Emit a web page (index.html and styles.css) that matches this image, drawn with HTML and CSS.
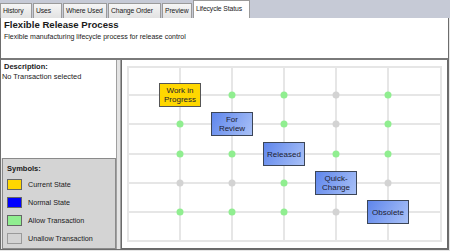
FILE: index.html
```html
<!DOCTYPE html>
<html lang="en">
<head>
    <meta charset="UTF-8">
    <title>Lifecycle Status</title>
    <link rel="stylesheet" href="styles.css">
</head>
<body>
    <div class="tabs">
        <div class="tab tab-history">History</div>
        <div class="tab tab-uses">Uses</div>
        <div class="tab tab-where">Where Used</div>
        <div class="tab tab-change">Change Order</div>
        <div class="tab tab-preview">Preview</div>
        <div class="tab tab-status active">Lifecycle Status</div>
    </div>
    <div class="page">
        <div class="header">
            <div class="title">Flexible Release Process</div>
            <div class="subtitle">Flexible manufacturing lifecycle process for release control</div>
        </div>
        <div class="main">
            <div class="side">
                <div class="desc">
                    <div class="label">Description:</div>
                    <div class="text">No Transaction selected</div>
                </div>
                <div class="symbols">
                    <div class="label">Symbols:</div>
                    <div class="sym-list">
                        <div class="sym"><span class="swatch current"></span>Current State</div>
                        <div class="sym"><span class="swatch normal"></span>Normal State</div>
                        <div class="sym"><span class="swatch allow"></span>Allow Transaction</div>
                        <div class="sym"><span class="swatch unallow"></span>Unallow Transaction</div>
                    </div>
                </div>
            </div>
            <div class="splitter"></div>
            <div class="canvas">
                <div class="grid">
                    <svg class="lines" width="311" height="172" viewBox="0 0 311 172">
                        <g stroke="#e6e6e6" stroke-width="2">
                            <line x1="51" y1="0" x2="51" y2="172"/>
                            <line x1="103" y1="0" x2="103" y2="172"/>
                            <line x1="155" y1="0" x2="155" y2="172"/>
                            <line x1="207" y1="0" x2="207" y2="172"/>
                            <line x1="259" y1="0" x2="259" y2="172"/>
                            <line x1="0" y1="27" x2="311" y2="27"/>
                            <line x1="0" y1="56" x2="311" y2="56"/>
                            <line x1="0" y1="86" x2="311" y2="86"/>
                            <line x1="0" y1="115" x2="311" y2="115"/>
                            <line x1="0" y1="144" x2="311" y2="144"/>
                        </g>
                        <g fill="#90ee90">
                            <circle cx="103" cy="27" r="3.5"/>
                            <circle cx="155" cy="27" r="3.5"/>
                            <circle cx="259" cy="27" r="3.5"/>
                            <circle cx="51" cy="56" r="3.5"/>
                            <circle cx="155" cy="56" r="3.5"/>
                            <circle cx="259" cy="56" r="3.5"/>
                            <circle cx="51" cy="86" r="3.5"/>
                            <circle cx="103" cy="86" r="3.5"/>
                            <circle cx="207" cy="86" r="3.5"/>
                            <circle cx="259" cy="86" r="3.5"/>
                            <circle cx="155" cy="115" r="3.5"/>
                            <circle cx="51" cy="144" r="3.5"/>
                            <circle cx="103" cy="144" r="3.5"/>
                            <circle cx="155" cy="144" r="3.5"/>
                        </g>
                        <g fill="#d3d3d3">
                            <circle cx="207" cy="27" r="3.5"/>
                            <circle cx="207" cy="56" r="3.5"/>
                            <circle cx="51" cy="115" r="3.5"/>
                            <circle cx="103" cy="115" r="3.5"/>
                            <circle cx="259" cy="115" r="3.5"/>
                            <circle cx="207" cy="144" r="3.5"/>
                        </g>
                    </svg>
                    <div class="node current n-wip">Work in<br>Progress</div>
                    <div class="node n-review">For<br>Review</div>
                    <div class="node n-released">Released</div>
                    <div class="node n-quick">Quick-<br>Change</div>
                    <div class="node n-obsolete">Obsolete</div>
                </div>
            </div>
        </div>
    </div>
</body>
</html>
```

FILE: styles.css
```css
* {
    box-sizing: border-box;
}

body {
    margin: 0;
    width: 450px;
    height: 251px;
    overflow: hidden;
    background: #e6e6e6;
    font-family: "Liberation Sans", Arial, sans-serif;
    color: #1a1a1a;
}

.tabs {
    height: 18px;
    background: #c6cad6;
    display: flex;
    align-items: flex-end;
    gap: 1px;
}

.tab {
    height: 15px;
    padding: 0 2px;
    font-size: 6.8px;
    line-height: 14px;
    letter-spacing: -0.1px;
    background: linear-gradient(#f6f6f6, #e2e2e2);
    border: 1px solid #9a9a9a;
    border-bottom: none;
    white-space: nowrap;
    overflow: hidden;
}

.tab-history { width: 32px; }
.tab-uses { width: 29px; }
.tab-where { width: 44px; }
.tab-change { width: 53px; }
.tab-preview { width: 30px; }
.tab-status { width: 57px; }

.tab.active {
    height: 18px;
    line-height: 16px;
    background: #fff;
}

.page {
    height: 232px;
    margin-right: 1px;
    border: 1px solid #6d6d6d;
    border-top: none;
    display: flex;
    flex-direction: column;
}

.header {
    height: 42px;
    background: #fff;
    padding: 1px 3px;
    border-bottom: 2px solid #7a7a7a;
}

.title {
    font-size: 9.6px;
    font-weight: bold;
    line-height: 12px;
}

.subtitle {
    font-size: 7px;
    line-height: 10px;
    margin-top: 1px;
}

.main {
    flex: 1;
    display: flex;
}

.side {
    width: 116px;
    display: flex;
    flex-direction: column;
}

.desc {
    flex: 1;
    background: #fff;
    padding: 2px 3px;
}

.label {
    font-size: 7.5px;
    font-weight: bold;
    line-height: 10px;
}

.text {
    font-size: 7.4px;
    line-height: 10px;
    margin-left: -2px;
}

.symbols {
    height: 91px;
    margin-left: 1px;
    background: #d4d4d4;
    border: 1px solid #8a8a8a;
    padding: 5px 4px;
}

.sym-list {
    margin-top: 5px;
    display: flex;
    flex-direction: column;
    gap: 7px;
}

.sym {
    height: 11px;
    display: flex;
    align-items: center;
    gap: 6px;
    font-size: 7.2px;
}

.swatch {
    width: 15px;
    height: 11px;
    border: 1px solid #666;
}

.swatch.current { background: #ffd700; }
.swatch.normal { background: #0000ff; }
.swatch.allow { background: #90ee90; }
.swatch.unallow { background: #d3d3d3; border-color: #9a9a9a; }

.splitter {
    width: 5px;
    background: #e4e4e4;
    border-left: 1px solid #a0a0a0;
    border-right: 1px solid #a0a0a0;
}

.canvas {
    flex: 1;
    background: #fff;
    border: 1px solid #6a6a6a;
    border-top: none;
    padding: 6px 5px;
}

.grid {
    position: relative;
    width: 315px;
    height: 176px;
    border: 2px solid #e6e6e6;
}

.lines {
    display: block;
}

.node {
    position: absolute;
    width: 42px;
    height: 24px;
    display: flex;
    align-items: center;
    justify-content: center;
    text-align: center;
    font-size: 8px;
    line-height: 9px;
    color: #1c2030;
    background: linear-gradient(120deg, #5f86ec, #a9c1f7);
    border: 1px solid #3c4658;
}

.node.current {
    background: #ffd700;
    border-color: #555;
}

.n-wip { left: 30px; top: 15px; }
.n-review { left: 82px; top: 44px; }
.n-released { left: 134px; top: 74px; }
.n-quick { left: 186px; top: 103px; }
.n-obsolete { left: 238px; top: 132px; }
```
